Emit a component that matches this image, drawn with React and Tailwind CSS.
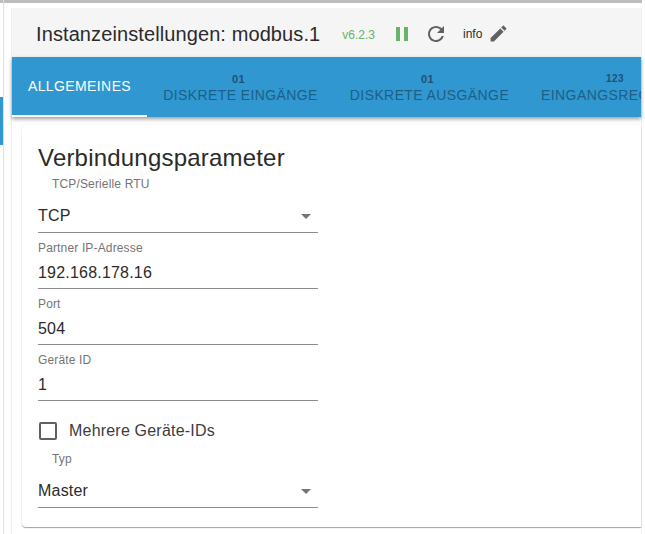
function Caret() {
  return (
    <svg width="24" height="24" viewBox="0 0 24 24" className="text-[#757575]" fill="currentColor">
      <path d="M7 10l5 5 5-5z" />
    </svg>
  );
}

function SelectField({ label, value }) {
  return (
    <div className="w-[280px]">
      <div className="pl-[14px] text-[12px] leading-[14px] tracking-[0.15px] text-[#757575]">{label}</div>
      <div className="mt-[12px] h-[30px] pb-[3px] flex items-center justify-between border-b border-[#8c8c8c] text-[16px] tracking-[0.2px] text-[#2b2b2b]">
        <span>{value}</span>
        <Caret />
      </div>
    </div>
  );
}

function TextField({ label, value }) {
  return (
    <div className="w-[280px] h-[56px] pt-[8px]">
      <div className="text-[12px] leading-[14px] tracking-[0.15px] text-[#757575]">{label}</div>
      <div className="h-[30px] mt-[4px] leading-[27px] border-b border-[#8c8c8c] text-[16px] tracking-[0.2px] text-[#2b2b2b]">{value}</div>
    </div>
  );
}

function Tab({ top, label, className, small }) {
  return (
    <div className={`shrink-0 h-[60px] flex flex-col items-center justify-center text-[#1d5f86] tracking-[0.4px] ${className}`}>
      <div className={`leading-[12px] font-bold text-[#1f5273] mt-[3px] mr-[4px] ${small ? 'text-[10px]' : 'text-[11px]'}`}>{top}</div>
      <div className="text-[14px] leading-[20px] whitespace-nowrap">{label}</div>
    </div>
  );
}

export default function App() {
  return (
    <div className="relative w-[645px] h-[534px] overflow-hidden bg-white font-['Liberation_Sans',Arial,sans-serif]">
      {/* Seitenleiste */}
      <div className="absolute left-0 top-[97px] w-[3px] h-[48px] bg-[#3097d1]" />
      <div className="absolute left-[3px] top-0 w-px h-full bg-[#e0e0e0]" />
      <div className="mr-[3px] h-[3px] bg-[#bdbdbd]" />

      <div className="ml-[11px] mr-[3px] mt-[5px] h-[526px] border-l border-r border-[#efefef]">
        {/* Kopfzeile */}
        <div className="h-[49px] bg-[#f5f5f5] flex items-center pl-[24px] pt-[2px]">
          <h1 className="text-[20px] tracking-[0.1px] text-[#2b2b2b] font-normal">Instanzeinstellungen: modbus.1</h1>
          <span className="ml-[22px] text-[12px] mt-[2px] text-[#66b36a]">v6.2.3</span>
          <svg width="24" height="24" viewBox="0 0 24 24" fill="currentColor" className="ml-[15px] text-[#66b36a]">
            <path d="M6 19h4V5H6v14zm8-14v14h4V5h-4z" />
          </svg>
          <svg width="24" height="24" viewBox="0 0 24 24" fill="currentColor" className="ml-[10px] text-[#616161]">
            <path d="M17.65 6.35C16.2 4.9 14.21 4 12 4c-4.42 0-7.99 3.58-7.99 8s3.57 8 7.99 8c3.73 0 6.84-2.55 7.73-6h-2.08c-.82 2.33-3.04 4-5.65 4-3.31 0-6-2.69-6-6s2.69-6 6-6c1.66 0 3.14.69 4.22 1.78L13 11h7V4l-2.35 2.35z" />
          </svg>
          <span className="ml-[15px] text-[12px] text-[#2b2b2b]">info</span>
          <svg width="21" height="21" viewBox="0 0 24 24" fill="currentColor" className="ml-[6px] text-[#616161]">
            <path d="M3 17.25V21h3.75L17.81 9.94l-3.75-3.75L3 17.25zM20.71 7.04c.39-.39.39-1.02 0-1.41l-2.34-2.34c-.39-.39-1.02-.39-1.41 0l-1.83 1.83 3.75 3.75 1.83-1.83z" />
          </svg>
        </div>

        {/* Tabs */}
        <div className="h-[60px] flex bg-[#3097d1] shadow-[0_2px_4px_rgba(0,0,0,0.4)] overflow-hidden">
          <div className="w-[135px] shrink-0 h-[60px] border-b-2 border-white flex items-center justify-center text-[14px] tracking-[0.4px] text-white">
            ALLGEMEINES
          </div>
          <Tab top="01" label="DISKRETE EINGÄNGE" className="w-[187px]" />
          <Tab top="01" label="DISKRETE AUSGÄNGE" className="w-[191px]" />
          <Tab top="123" label="EINGANGSREGISTER" className="w-[184px]" small />
        </div>

        {/* Karte */}
        <div className="ml-[10px] mt-[8px] h-[402px] rounded-l-[4px] bg-white shadow-[0_1px_1px_rgba(0,0,0,0.35),0_0_2px_rgba(0,0,0,0.08)] pl-[16px] pt-[18px]">
          <h2 className="text-[24px] leading-[30px] tracking-[0.2px] text-[#2b2b2b] font-normal mb-[4px]">Verbindungsparameter</h2>
          <SelectField label="TCP/Serielle RTU" value="TCP" />
          <TextField label="Partner IP-Adresse" value="192.168.178.16" />
          <TextField label="Port" value="504" />
          <TextField label="Geräte ID" value="1" />
          <label className="mt-[18px] mb-[9px] ml-px flex items-center gap-[12px] text-[16px] tracking-[0.2px] text-[#3c3c3c]">
            <span className="w-[18px] h-[18px] rounded-[2px] border-2 border-[#616161]" />
            Mehrere Geräte-IDs
          </label>
          <SelectField label="Typ" value="Master" />
        </div>
      </div>
    </div>
  );
}
